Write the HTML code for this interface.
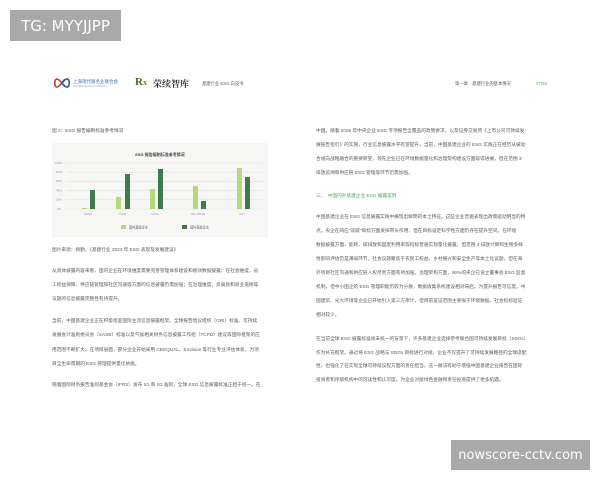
<!DOCTYPE html>
<html><head><meta charset="utf-8"><style>
*{margin:0;padding:0;box-sizing:border-box}
body{width:600px;height:480px;background:#fff;position:relative;overflow:hidden;font-family:"Liberation Sans","Noto Sans CJK SC",sans-serif;color:#666}
.a{position:absolute;white-space:nowrap;overflow:hidden}
.t{font-size:4.7px;color:#5a5a5a;letter-spacing:0}
.wm{position:absolute;background:#a9a9a9;color:#fff;display:flex;align-items:center;justify-content:center}
</style></head><body>
<div class="wm" style="left:10px;top:10px;width:111px;height:31px;font-size:15px;font-family:'DejaVu Sans',sans-serif">TG: MYYJJPP</div>
<div class="wm" style="left:451px;top:440px;width:139px;height:30px;font-size:13px;font-family:'DejaVu Sans',sans-serif">nowscore-cctv.com</div>

<!-- header -->
<svg class="a" style="left:54px;top:77px" width="16" height="12" viewBox="0 0 16 12"><path d="M3 2 C0 2 0 10 3 10 C6 10 10 2 13 2 C16 2 16 10 13 10 C10 10 6 2 3 2Z" fill="none" stroke="#c0392b" stroke-width="1.6"/><path d="M8 6 C10 2 13 2 13 2 C16 2 16 10 13 10 C10 10 8 6 8 6" fill="none" stroke="#2e5fa8" stroke-width="1.6"/></svg>
<div class="a" style="left:73px;top:79px;font-size:4.5px;color:#3d6bb0">上海现代服务业联合会</div>
<div class="a" style="left:73px;top:85px;font-size:2.5px;color:#8aa">Shanghai Services Federation</div>
<div class="a" style="left:135px;top:76px;font-size:11px;font-weight:bold;color:#4a6a1e;font-family:'Liberation Serif',serif">R<span style="font-size:8px;color:#6a8a2e">x</span></div>
<div class="a" style="left:153px;top:77px;font-size:9px;font-weight:bold;color:#333;font-family:'Noto Serif CJK SC',serif">荣续智库</div>
<div class="a t" style="left:202px;top:81px;font-size:4.3px">基建行业 ESG 白皮书</div>
<div class="a t" style="left:455px;top:81px;font-size:4.3px">第一章　基建行业的基本情况</div>
<div class="a t" style="left:536px;top:81px;font-size:4.3px;color:#5aa05a">27/28</div>

<!-- left column -->
<div class="a t" style="left:52px;top:128px">图 2：ESG 报告编制标准参考情况</div>
<div class="a" style="left:52px;top:143px;width:216px;height:94px;background:#f6f7f5"></div>
<svg class="a" style="left:52px;top:143px" width="216" height="94">
<text x="108" y="13" font-size="4" font-weight="bold" fill="#444" text-anchor="middle" font-family="Liberation Sans, Noto Sans CJK SC">ESG 报告编制标准参考情况</text>
<g stroke="#e0e0e0" stroke-width="0.6">
<line x1="14" y1="20" x2="211" y2="20"/><line x1="14" y1="29.2" x2="211" y2="29.2"/><line x1="14" y1="38.4" x2="211" y2="38.4"/><line x1="14" y1="47.6" x2="211" y2="47.6"/><line x1="14" y1="56.8" x2="211" y2="56.8"/><line x1="14" y1="66" x2="211" y2="66"/></g>
<g fill="#999" font-size="3" font-family="Liberation Sans">
<text x="3" y="21">100%</text><text x="4" y="30">80%</text><text x="4" y="39">60%</text><text x="4" y="48.5">40%</text><text x="4" y="57.5">20%</text><text x="5" y="67">0%</text>
<g text-anchor="middle"><text x="36" y="72">SASB</text><text x="70" y="72">TCFD</text><text x="103" y="72">SDGs</text><text x="146" y="72">ISO 26000</text><text x="190" y="72">GRI</text></g></g>
<g fill="#b6d77a"><rect x="30" y="65" width="5" height="1"/><rect x="64" y="54" width="5" height="12"/><rect x="98" y="46" width="5" height="20"/><rect x="141" y="43" width="5" height="23"/><rect x="185" y="25" width="5" height="41"/></g>
<g fill="#3f7a4a"><rect x="38" y="47" width="5" height="19"/><rect x="73" y="31" width="5" height="35"/><rect x="106" y="26" width="5" height="40"/><rect x="149" y="58" width="5" height="8"/><rect x="193" y="34" width="5" height="32"/></g>
<rect x="69" y="82" width="5" height="4" fill="#b6d77a"/><text x="77" y="85.5" font-size="3.2" fill="#666">国内基建企业</text>
<rect x="130" y="82" width="5" height="4" fill="#3f7a4a"/><text x="138" y="85.5" font-size="3.2" fill="#666">国外基建企业</text>
</svg>
<div class="a t" style="left:52px;top:247px">图片来源：榜勤，《基建行业 2023 年 ESG 表现及发展建议》</div>
<div class="a t" style="left:52px;top:268px;width:231px">从具体披露内容来看，国内企业在环境维度需要完善管理体系建设和绩效数据披露；在社会维度，员</div>
<div class="a t" style="left:52px;top:282px;width:231px">工权益保障、供应链管理和社区沟通等方面的信息披露仍需加强；在治理维度，反腐败和商业道德等</div>
<div class="a t" style="left:52px;top:296px;width:231px">议题的信息披露完整性有待提升。</div>
<div class="a t" style="left:52px;top:318px;width:231px">当前，中国基建企业正在积极借鉴国际主流信息披露框架。全球报告倡议组织（GRI）标准、可持续</div>
<div class="a t" style="left:52px;top:332px;width:231px">发展会计准则委员会（SASB）标准以及气候相关财务信息披露工作组（TCFD）建议等国际框架的应</div>
<div class="a t" style="left:52px;top:347px;width:231px">用范围不断扩大。在项目层面，部分企业开始采用 CEEQUAL、Envision 等行业专业评估体系，为项</div>
<div class="a t" style="left:52px;top:361px;width:231px">目全生命周期的 ESG 管理提供量化依据。</div>
<div class="a t" style="left:52px;top:382px;width:231px">随着国际财务报告准则基金会（IFRS）发布 S1 和 S2 准则，全球 ESG 信息披露标准正趋于统一。在</div>

<!-- right column -->
<div class="a t" style="left:316px;top:128px;width:232px">中国，随着 2025 年中央企业 ESG 专项报告全覆盖的政策要求，以及证券交易所《上市公司可持续发</div>
<div class="a t" style="left:316px;top:142px;width:232px">展报告指引》的实施，行业信息披露水平有望提升。当前，中国基建企业的 ESG 实践正在经历从被动</div>
<div class="a t" style="left:316px;top:156px;width:232px">合规向战略融合的重要转变，领先企业已在环境数据量化和治理架构建设方面取得进展，但在范围 3</div>
<div class="a t" style="left:316px;top:170px;width:232px">排放追溯和供应链 ESG 管理等环节仍需加强。</div>
<div class="a t" style="left:316px;top:193px;color:#3fae5a">三、　中国内外基建企业 ESG 披露案例</div>
<div class="a t" style="left:316px;top:214px;width:232px">中国基建企业在 ESG 信息披露实践中展现出鲜明的本土特征。这些企业普遍表现出政策驱动明显的特</div>
<div class="a t" style="left:316px;top:228px;width:232px">点，央企在响应"双碳"目标方面发挥带头作用，但在目标设定科学性方面仍存在提升空间。在环境</div>
<div class="a t" style="left:316px;top:242px;width:232px">数据披露方面，能耗、碳排放和固废利用率等指标普遍实现量化披露，但范围 3 排放计算和生物多样</div>
<div class="a t" style="left:316px;top:256px;width:232px">性影响评估仍是薄弱环节。社会议题聚焦于农民工权益、乡村振兴和安全生产等本土化议题，但在海</div>
<div class="a t" style="left:316px;top:270px;width:232px">外项目社区沟通和供应链人权尽责方面有待加强。治理架构方面，90%的央企已设立董事会 ESG 监督</div>
<div class="a t" style="left:316px;top:284px;width:232px">机制，但中小国企的 ESG 管理职能仍较为分散，数据收集系统建设相对滞后。为提升报告可信度，中</div>
<div class="a t" style="left:316px;top:298px;width:232px">国建筑、光大环境等企业已开始引入第三方审计，但目前鉴证范围主要限于环境数据，社会指标验证</div>
<div class="a t" style="left:316px;top:312px;width:232px">相对较少。</div>
<div class="a t" style="left:316px;top:336px;width:232px">在当前全球 ESG 披露标准尚未统一的背景下，许多基建企业选择参考联合国可持续发展目标（SDGs）</div>
<div class="a t" style="left:316px;top:350px;width:232px">作为补充框架。通过将 ESG 战略与 SDGs 目标进行对接，企业不仅提升了可持续发展路径的全球适配</div>
<div class="a t" style="left:316px;top:363px;width:232px">性，也强化了在实现全球可持续议程方面的责任担当。这一做法有助于增强中国基建企业报告在国际</div>
<div class="a t" style="left:316px;top:377px;width:232px">投资者和评级机构中的可读性和认可度，为企业对接绿色金融和责任投资提供了更多机遇。</div>
</body></html>
